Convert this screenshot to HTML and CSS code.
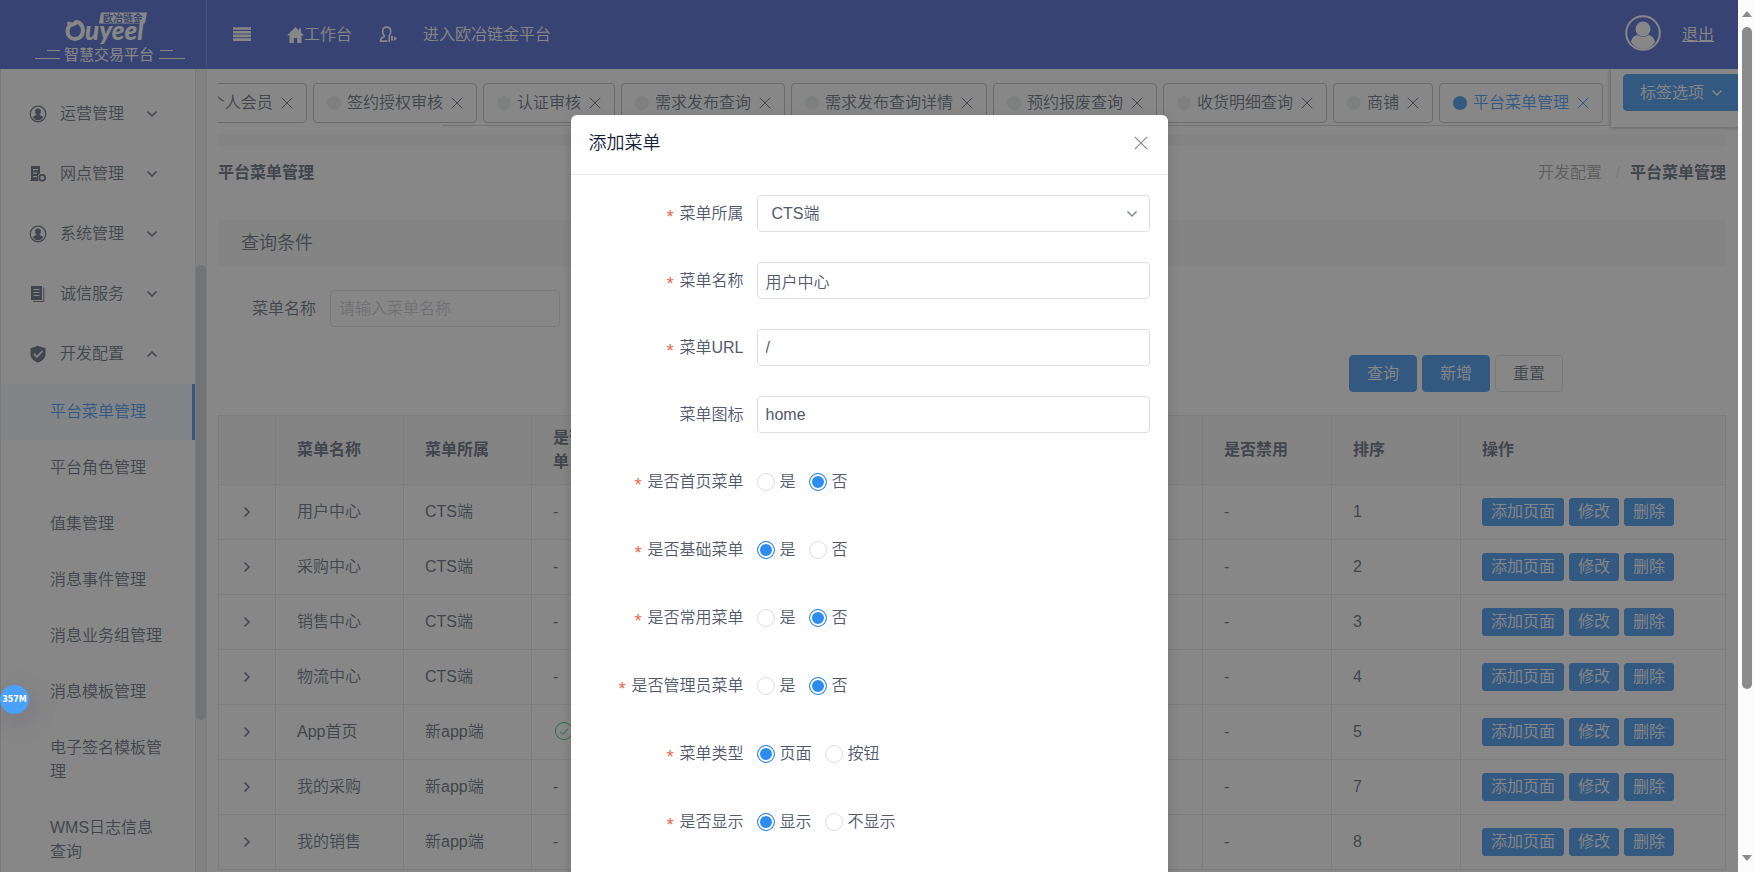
FILE: index.html
```html
<!DOCTYPE html>
<html lang="zh-CN">
<head>
<meta charset="utf-8">
<title>平台菜单管理</title>
<link rel="stylesheet" href="styles.css">
</head>
<body>
<svg class="defs" aria-hidden="true">
  <symbol id="down" viewBox="0 0 12 12"><path d="M1.500 3.500 6 8 10.500 3.500" fill="none" stroke="currentColor" stroke-width="1.500"/></symbol>
  <symbol id="x" viewBox="0 0 12 12"><path d="M.7.7l10.600 10.600M11.300.7.7 11.300" fill="none" stroke="currentColor" stroke-width="1"/></symbol>
  <symbol id="person" viewBox="0 0 18 18"><circle cx="9" cy="9" r="7.800" fill="none" stroke="currentColor" stroke-width="1.200"/><path d="M9 3.500c1.900 0 2.900 1.300 2.900 3 0 1.400-.6 2.500-1.400 3.100.2 1 3 1.200 3.600 2.700-1 1.800-2.900 3-5.100 3s-4.100-1.200-5.100-3c.6-1.500 3.400-1.700 3.600-2.700C6.700 9 6.100 7.900 6.100 6.500c0-1.700 1-3 2.900-3z" fill="currentColor"/></symbol>
</svg>
<div class="page">
  <header class="header">
    <a class="brand" href="#" aria-label="欧冶链金智慧交易平台">
      <svg width="152" height="60" viewBox="0 0 152 60">
        <path d="M66 4.500h46l-2 11H64z" fill="#fff"/>
        <text x="88" y="13.500" text-anchor="middle" class="logo-tag">欧冶链金</text>
        <path d="M34 15.500c4 2 5.500 1 7-1.500 4 0 7 3.500 7 8.500s-3.500 8.500-8 8.500-7.500-3.500-7.500-8c0-2 .8-4 2.300-5.500" fill="none" stroke="#fff" stroke-width="4" stroke-linecap="round" stroke-linejoin="round"/>
        <text x="50" y="32" class="logo-word">uyeel</text>
        <text x="74" y="52" text-anchor="middle" class="logo-sub">智慧交易平台</text>
        <path d="M12 42.500h13M0 50.500h25M125 42.500h13M124 50.500h26" stroke="#fff"/>
      </svg>
    </a>
    <nav class="topnav">
      <button class="icon-btn" aria-label="折叠菜单"><svg width="18" height="14" viewBox="0 0 18 14"><path d="M0 1.500h18M0 5.200h18M0 8.900h18M0 12.600h18" stroke="currentColor" stroke-width="2.600"/></svg></button>
      <a href="#" class="home"><svg width="17" height="16" viewBox="0 0 17 16"><path d="M8.500 0 0 8.500h2.500V16h4.300v-5h3.400v5h4.300V8.500H17l-3-3V1.500h-2v2z" fill="currentColor"/></svg>工作台</a>
      <a href="#" class="enter"><svg width="18" height="17" viewBox="0 0 18 17"><path d="M8.500 15.200H1.500c0-2.400 1-3.700 3-4.200 1-.3 1-1 .4-1.700C4 8.300 3.700 7 3.700 5.500c0-2.700 1.500-4.300 4-4.300s4 1.600 4 4.300c0 1.500-.3 2.800-1.200 3.800-.6.700-.4 1.200.3 1.500" fill="none" stroke="currentColor" stroke-width="1.700"/><path d="M9.500 11H11v5H9.500zM12 10h2v4.500h-2zM15 10l3 2.500-3 2.500z" fill="currentColor"/></svg>进入欧冶链金平台</a>
    </nav>
    <div class="account">
      <svg width="36" height="36" viewBox="0 0 36 36"><circle cx="18" cy="18" r="16.800" fill="none" stroke="#fff" stroke-width="2"/><circle cx="18" cy="14" r="7.500" fill="#fff"/><path d="M6 27c1-4.500 3.500-6.500 6.500-7 3.500 2.600 7.500 2.600 11 0 3 .5 5.500 2.500 6.500 7-3 4.500-7 7-12 7S9 31.500 6 27z" fill="#fff"/></svg>
      <a href="#">退出</a>
    </div>
  </header>
  <div class="body">
    <aside class="sidebar">
      <nav class="menu">
        <a class="group" href="#"><svg class="gi"><use href="#person"/></svg>运营管理<svg class="arr"><use href="#down"/></svg></a>
        <a class="group" href="#"><svg class="gi" viewBox="0 0 18 18"><path d="M2 1h9v7.500a5 5 0 0 0-1 7.500H1v-1h1zM4 4v1.300h5V4zm0 3.500v1.300h4V7.500zM4 11v1.300h4V11z" fill="currentColor" fill-rule="evenodd"/><circle cx="13.200" cy="12.700" r="2.900" fill="none" stroke="currentColor" stroke-width="1.800"/></svg>网点管理<svg class="arr"><use href="#down"/></svg></a>
        <a class="group" href="#"><svg class="gi"><use href="#person"/></svg>系统管理<svg class="arr"><use href="#down"/></svg></a>
        <a class="group" href="#"><svg class="gi" viewBox="0 0 18 18"><path d="M2 1h11v14H2zM4.500 4v1h6V4zm0 3v1h6V7zm0 3v1h6v-1z" fill="currentColor" fill-rule="evenodd"/><path d="M14.800 2.500v14H4" fill="none" stroke="currentColor"/></svg>诚信服务<svg class="arr"><use href="#down"/></svg></a>
        <a class="group" href="#"><svg class="gi" viewBox="0 0 18 18"><path d="M9 .8 16.500 3.200v6c0 4-3.300 6.700-7.500 8.300-4.200-1.600-7.500-4.300-7.500-8.300v-6z" fill="currentColor"/><path d="M5 8.800l3 3 5.500-5.800" fill="none" stroke="#fff" stroke-width="1.700"/></svg>开发配置<svg class="arr open"><use href="#down"/></svg></a>
        <a class="item active" href="#">平台菜单管理</a>
        <a class="item" href="#">平台角色管理</a>
        <a class="item" href="#">值集管理</a>
        <a class="item" href="#">消息事件管理</a>
        <a class="item" href="#">消息业务组管理</a>
        <a class="item" href="#">消息模板管理</a>
        <a class="item" href="#">电子签名模板管理</a>
        <a class="item" href="#">WMS日志信息查询</a>
      </nav>
      <div class="side-track"><div class="side-thumb"></div></div>
    </aside>
    <main class="main">
      <div class="tabbar">
        <div class="tabs">
          <div class="tab"><i></i>个人会员<button aria-label="关闭"><svg><use href="#x"/></svg></button></div>
          <div class="tab"><i></i>签约授权审核<button aria-label="关闭"><svg><use href="#x"/></svg></button></div>
          <div class="tab"><i></i>认证审核<button aria-label="关闭"><svg><use href="#x"/></svg></button></div>
          <div class="tab"><i></i>需求发布查询<button aria-label="关闭"><svg><use href="#x"/></svg></button></div>
          <div class="tab"><i></i>需求发布查询详情<button aria-label="关闭"><svg><use href="#x"/></svg></button></div>
          <div class="tab"><i></i>预约报废查询<button aria-label="关闭"><svg><use href="#x"/></svg></button></div>
          <div class="tab"><i></i>收货明细查询<button aria-label="关闭"><svg><use href="#x"/></svg></button></div>
          <div class="tab"><i></i>商铺<button aria-label="关闭"><svg><use href="#x"/></svg></button></div>
          <div class="tab current"><i></i>平台菜单管理<button aria-label="关闭"><svg><use href="#x"/></svg></button></div>
        </div>
        <div class="tab-options"><button class="btn primary">标签选项<svg><use href="#down"/></svg></button></div>
      </div>
      <div class="content">
        <div class="band"></div>
        <div class="titlebar">
          <h1>平台菜单管理</h1>
          <div class="crumbs"><a href="#">开发配置</a><span>/</span><strong>平台菜单管理</strong></div>
        </div>
        <h2 class="section">查询条件</h2>
        <form class="query">
          <div class="field"><label for="q">菜单名称</label><input id="q" type="text" placeholder="请输入菜单名称"></div>
          <div class="actions"><button type="button" class="btn primary">查询</button><button type="button" class="btn primary">新增</button><button type="button" class="btn">重置</button></div>
        </form>
        <table class="grid">
          <colgroup><col class="c-exp"><col class="c-std"><col class="c-std"><col class="c-std"><col><col><col><col><col class="c-num"><col class="c-num"><col class="c-act"></colgroup>
          <thead><tr><th></th><th>菜单名称</th><th>菜单所属</th><th>是否首页菜单</th><th></th><th></th><th></th><th></th><th>是否禁用</th><th>排序</th><th>操作</th></tr></thead>
          <tbody id="rows"></tbody>
        </table>
      </div>
    </main>
  </div>
  <div class="mask">
    <section class="dialog" role="dialog" aria-labelledby="dlg-title">
      <div class="dialog-head"><h2 id="dlg-title">添加菜单</h2><button aria-label="关闭"><svg><use href="#x"/></svg></button></div>
      <form class="form">
        <div class="row"><label class="req" for="f1">菜单所属</label><div class="select"><select id="f1"><option>CTS端</option></select><svg><use href="#down"/></svg></div></div>
        <div class="row"><label class="req" for="f2">菜单名称</label><input id="f2" type="text" value="用户中心"></div>
        <div class="row"><label class="req" for="f3">菜单URL</label><input id="f3" type="text" value="/"></div>
        <div class="row"><label for="f4">菜单图标</label><input id="f4" type="text" value="home"></div>
        <div class="row pick" role="radiogroup"><span class="req">是否首页菜单</span><div class="radios"><label><input type="radio" name="r1">是</label><label><input type="radio" name="r1" checked>否</label></div></div>
        <div class="row pick" role="radiogroup"><span class="req">是否基础菜单</span><div class="radios"><label><input type="radio" name="r2" checked>是</label><label><input type="radio" name="r2">否</label></div></div>
        <div class="row pick" role="radiogroup"><span class="req">是否常用菜单</span><div class="radios"><label><input type="radio" name="r3">是</label><label><input type="radio" name="r3" checked>否</label></div></div>
        <div class="row pick" role="radiogroup"><span class="req">是否管理员菜单</span><div class="radios"><label><input type="radio" name="r4">是</label><label><input type="radio" name="r4" checked>否</label></div></div>
        <div class="row pick" role="radiogroup"><span class="req">菜单类型</span><div class="radios"><label><input type="radio" name="r5" checked>页面</label><label><input type="radio" name="r5">按钮</label></div></div>
        <div class="row pick" role="radiogroup"><span class="req">是否显示</span><div class="radios"><label><input type="radio" name="r6" checked>显示</label><label><input type="radio" name="r6">不显示</label></div></div>
      </form>
    </section>
  </div>
  <div class="memory">357M</div>
</div>
<div class="scrollbar">
  <svg width="12" height="8" viewBox="0 0 12 8"><path d="M6 1l5 6H1z" fill="#8b8b8b"/></svg>
  <div class="track"><div class="thumb"></div></div>
  <svg width="12" height="8" viewBox="0 0 12 8"><path d="M6 7 1 1h10z" fill="#8b8b8b"/></svg>
</div>
<script src="app.js"></script>
</body>
</html>
```
FILE: styles.css
```css
* { box-sizing: border-box; }
body {
  margin: 0;
  display: flex;
  height: 100vh;
  overflow: hidden;
  font: 16px/24px "Liberation Sans", "Noto Sans CJK SC", sans-serif;
  font-weight: 350;
  color: #515a6e;
  background: #fff;
}
a { color: inherit; text-decoration: none; }
h1, h2 { margin: 0; font-size: 16px; font-weight: 700; }
button, input, select { font: inherit; color: inherit; margin: 0; }
button { border: 0; padding: 0; background: none; display: inline-flex; align-items: center; justify-content: center; }
svg { display: block; flex: none; }
.defs { position: absolute; width: 0; height: 0; }

.page { position: relative; flex: 1; min-width: 0; overflow: hidden; display: flex; flex-direction: column; }

.header { flex: none; display: flex; height: 69px; background: #3858cc; color: #fff; }
.brand { width: 207px; padding: 8px 0 0 35px; border-right: 1px solid #5f7ad8; }
.logo-tag { font: 700 10px "Liberation Sans", "Noto Sans CJK SC", sans-serif; fill: #3858cc; }
.logo-word { font: italic 900 26px Lato, sans-serif; fill: #fff; }
.logo-sub { font: 400 15px "Liberation Sans", "Noto Sans CJK SC", sans-serif; fill: #fff; }
.topnav { flex: 1; display: flex; align-items: center; padding-left: 26px; }
.topnav a { display: flex; align-items: center; }
.icon-btn { width: 18px; padding-bottom: 2px; }
.home { margin-left: 36px; }
.enter { margin-left: 27px; gap: 26px; }
.account { display: flex; align-items: center; gap: 21px; padding-right: 24px; }
.account svg { margin-bottom: 4px; }
.account a { text-decoration: underline; }

.body { flex: 1; min-height: 0; display: flex; }
.sidebar { flex: none; width: 207px; display: flex; overflow: hidden; border-right: 1px solid #e8e8e8; }
.menu { flex: 1; padding-top: 15px; border-left: 1px solid #dcdee2; }
.group { display: flex; align-items: center; height: 60px; padding-left: 28px; }
.gi { width: 18px; height: 18px; margin-right: 13px; }
.arr { width: 12px; height: 12px; margin-left: 22px; }
.arr.open { transform: rotate(180deg); }
.item { display: block; padding: 16px 29px 16px 49px; }
.item.active { color: #2d8cf0; background: #f0faff; border-right: 3px solid #2d8cf0; padding-right: 26px; }
.side-track { width: 11px; padding-top: 196px; background: #f1f1f1; border-left: 1px solid #dcdee2; }
.side-thumb { height: 455px; background: #c9ccd1; border-radius: 8px; }

.main { flex: 1; min-width: 0; }
.tabbar { display: flex; height: 65px; padding-left: 11px; }
.tabs { position: relative; flex: 1; min-width: 0; display: flex; justify-content: flex-end; gap: 6px; overflow: hidden; height: 57px; padding: 14px 8px 0 0; }
.tabs::after { content: ""; position: absolute; left: 224px; right: 0; bottom: 0; height: 1px; background: #d0d0d0; }
.tab { flex: none; display: flex; align-items: center; height: 40px; padding: 0 13px; border: 1px solid #b8b8b8; border-radius: 4px; }
.tab i { width: 14px; height: 14px; margin-right: 6px; border-radius: 50%; background: #e8eaec; }
.tab svg { width: 12px; height: 12px; margin-left: 8px; }
.tab.current { color: #2d8cf0; }
.tab.current i { background: #2d8cf0; }
.tab-options { flex: none; width: 127px; height: 58px; padding: 5px 0 0 12px; overflow: hidden; box-shadow: 0 0 5px #888; clip-path: inset(0 0 -8px -8px); }
.tab-options .btn { width: 132px; justify-content: flex-start; padding-left: 16px; gap: 7px; }
.tab-options svg { width: 12px; height: 12px; }
.btn { height: 37px; border-radius: 4px; border: 1px solid #dcdee2; }
.btn.primary { border-color: #2d8cf0; background: #2d8cf0; color: #fff; }

.content { padding: 0 12px 0 11px; }
.band { height: 12px; background: #f5f5f5; }
.titlebar { display: flex; justify-content: space-between; align-items: center; height: 54px; }
.crumbs { display: flex; }
.crumbs a { color: #999; }
.crumbs span { width: 28px; padding-left: 4px; text-align: center; color: #dcdee2; }
.crumbs strong { font-weight: 700; }
.section { margin-top: 20px; padding: 11px 23px; background: #f7f7f7; font-size: 18px; font-weight: 350; }
.query { padding: 24px 0 23px; }
.field { display: flex; align-items: center; gap: 14px; padding-left: 34px; }
input[type="text"], select { height: 37px; padding: 0 8px; border: 1px solid #dcdee2; border-radius: 4px; background: #fff; outline: 0; }
.field input { width: 230px; }
.field input::placeholder { color: #c5c8ce; opacity: 1; }
.actions { display: flex; justify-content: flex-end; gap: 5px; padding: 28px 163px 0 0; }
.actions .btn { width: 68px; }

.grid { width: 100%; table-layout: fixed; border-collapse: collapse; border: 1px solid #c8cacf; }
.grid th, .grid td { padding: 0 21px; text-align: left; border: 1px solid #e3e5e8; font-weight: 350; }
.grid th { height: 69px; background: #f8f8f9; font-weight: 700; }
.grid td { height: 55px; }
.grid td:first-child { padding: 0 22px; }
.grid td:first-child svg { width: 12px; height: 12px; transform: rotate(-90deg); }
.c-exp { width: 57px; }
.c-std { width: 128px; }
.c-num { width: 129px; }
.c-act { width: 265px; }
.ops { display: flex; gap: 5px; }
.ops .btn { height: 28px; padding: 0 8px; border-radius: 3px; }

.mask { position: absolute; inset: 0; display: flex; justify-content: center; align-items: flex-start; padding-top: 115px; background: rgba(55, 55, 55, .6); }
.dialog { width: 597px; background: #fff; border-radius: 6px; box-shadow: 0 4px 12px rgba(0, 0, 0, .15); }
.dialog-head { display: flex; justify-content: space-between; align-items: center; height: 60px; padding: 0 20px 4px 18px; border-bottom: 1px solid #e8eaec; }
.dialog-head h2 { font-size: 18px; font-weight: 350; color: #17233d; }
.dialog-head svg { width: 14px; height: 14px; color: #888; }
.form { display: flex; flex-direction: column; gap: 30px; padding: 20px 18px 40px 0; }
.row { display: grid; grid-template-columns: 173px 1fr; column-gap: 13px; align-items: center; min-height: 37px; }
.pick { min-height: 38px; }
.row > :first-child { text-align: right; }
.req::before { content: "*"; margin-right: 4px; font: 18px/16px "Liberation Mono", monospace; color: #f0644a; vertical-align: -4px; }
.select { display: grid; align-items: center; }
.select > * { grid-area: 1 / 1; }
.select select { appearance: none; padding: 0 14px; }
.select svg { width: 12px; height: 12px; justify-self: end; margin-right: 12px; color: #808695; pointer-events: none; }
.radios { display: flex; gap: 13px; }
.radios label { display: flex; align-items: center; gap: 5px; }
input[type="radio"] { appearance: none; width: 18px; height: 18px; border: 1px solid #dcdee2; border-radius: 50%; background: #fff; }
input[type="radio"]:checked { border-color: #2d8cf0; background: #2d8cf0; box-shadow: inset 0 0 0 2px #fff; }

.memory { position: absolute; left: 0; top: 685px; width: 29px; height: 29px; border-radius: 50%; background: #4ba0fa; color: #fff; font: 700 8px/29px "DejaVu Sans", sans-serif; text-align: center; box-shadow: 4px 8px 24px rgba(80, 80, 120, .3); }

.scrollbar { flex: none; width: 17px; display: flex; flex-direction: column; align-items: center; padding: 10px 0; background: #fcfcfc; }
.track { flex: 1; padding-top: 9px; }
.thumb { width: 10px; height: 80%; border-radius: 5px; background: #8b8b8b; }
```
FILE: app.js
```js
const rows = [
  ["用户中心", "CTS端", 1], ["采购中心", "CTS端", 2], ["销售中心", "CTS端", 3], ["物流中心", "CTS端", 4],
  ["App首页", "新app端", 5], ["我的采购", "新app端", 7], ["我的销售", "新app端", 8]
];
const check = '<svg width="20" height="20" viewBox="0 0 20 20" fill="none" stroke="#19be6b"><circle cx="11" cy="9" r="8.500"/><path d="M7 9.500l3 3 5-6"/></svg>';
document.getElementById("rows").innerHTML = rows.map(([name, owner, order]) =>
  `<tr><td><svg><use href="#down"/></svg></td><td>${name}</td><td>${owner}</td><td>${order === 5 ? check : "-"}</td>` +
  `<td></td><td></td><td></td><td></td><td>-</td><td>${order}</td>` +
  `<td><div class="ops"><button class="btn primary">添加页面</button><button class="btn primary">修改</button><button class="btn primary">删除</button></div></td></tr>`
).join("");
```
